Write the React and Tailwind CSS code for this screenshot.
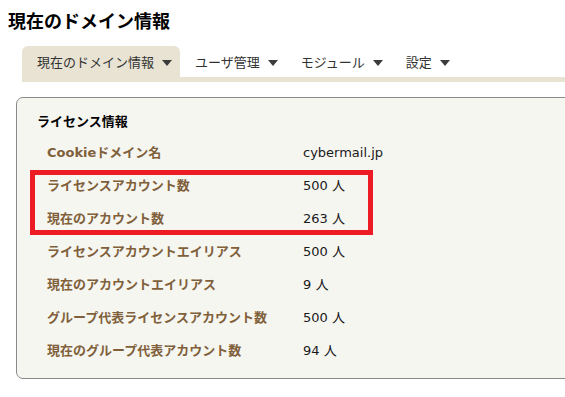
const tabs = [
  { label: '現在のドメイン情報', active: true },
  { label: 'ユーザ管理' },
  { label: 'モジュール' },
  { label: '設定' },
];

const rows = [
  ['Cookieドメイン名', 'cybermail.jp'],
  ['ライセンスアカウント数', '500 人'],
  ['現在のアカウント数', '263 人'],
  ['ライセンスアカウントエイリアス', '500 人'],
  ['現在のアカウントエイリアス', '9 人'],
  ['グループ代表ライセンスアカウント数', '500 人'],
  ['現在のグループ代表アカウント数', '94 人'],
];

const Caret = () => (
  <span className="ml-2 inline-block w-0 h-0 border-l-[5px] border-r-[5px] border-t-[6px] border-l-transparent border-r-transparent border-t-[#3c3c3c]" />
);

export default function App() {
  return (
    <div
      className="w-[565px] h-[397px] overflow-hidden bg-white text-[#222]"
      style={{ fontFamily: '"DejaVu Sans", "Noto Sans CJK JP", sans-serif' }}
    >
      <h1 className="pl-2 pt-[10px] text-[18px] leading-[24px] font-bold text-black">現在のドメイン情報</h1>

      <div className="ml-[22px] mt-[12px]">
        <div className="flex items-end h-[31px]">
          {tabs.map((t) => (
            <div
              key={t.label}
              className={
                'flex items-center h-[31px] pt-[3px] pl-[15px] pr-[8px] text-[13px] ' +
                (t.active ? 'bg-[#e8e3d3] rounded-t-[6px] text-[#333]' : 'text-[#333]')
              }
            >
              <span>{t.label}</span>
              <Caret />
            </div>
          ))}
        </div>
        <div className="h-[5px] bg-[#e8e3d3]" />
      </div>

      <div className="relative mt-[15px] ml-[16px] w-[600px] border border-[#8a8a8a] rounded-l-[7px] bg-[#f6f6f1] pt-[14px] pb-[11px]">
        <div className="pl-[20px] text-[13px] leading-[20px] font-bold text-black">ライセンス情報</div>
        <div className="mt-[4px] pl-[30px]">
          {rows.map(([k, v]) => (
            <div key={k} className="flex items-center h-[33px] text-[13px]">
              <div className="w-[256px] font-bold text-[#80603a]">{k}</div>
              <div className="text-[#1a1a1a]">{v}</div>
            </div>
          ))}
        </div>
        <div className="absolute left-[13px] top-[72px] w-[343px] h-[65px] border-[5px] border-[#ed1c24]" />
      </div>
    </div>
  );
}
